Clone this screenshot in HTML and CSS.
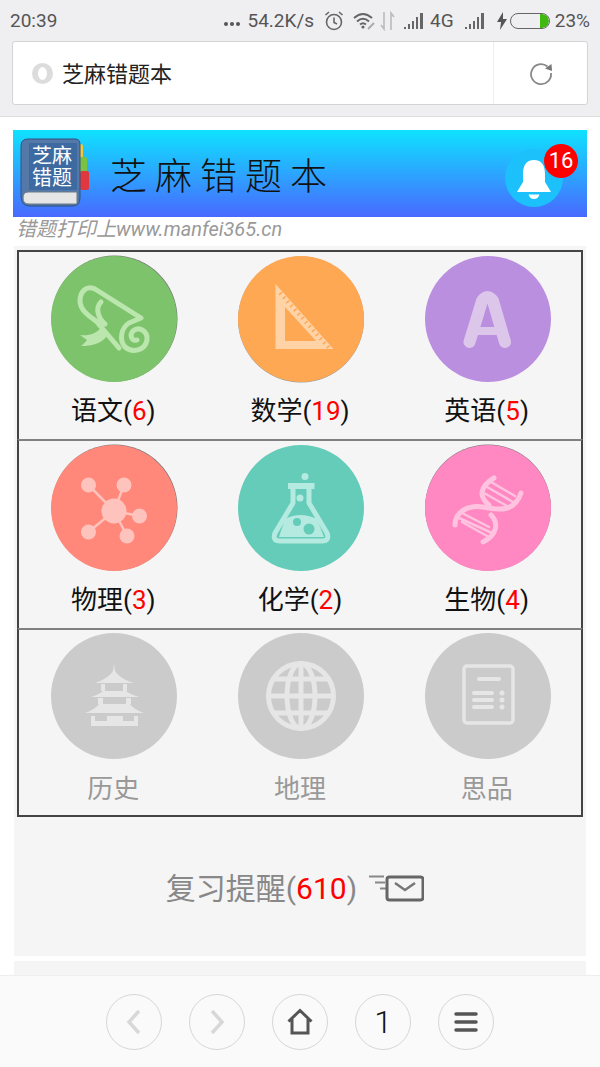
FILE: index.html
```html
<!DOCTYPE html>
<html lang="zh-CN">
  <head>
    <meta charset="UTF-8" />
    <meta name="viewport" content="width=device-width, initial-scale=1.0" />
    <title>芝麻错题本</title>
    <link rel="stylesheet" href="styles.css">
  </head>
  <body>
    <div class="status-bar">
      <span class="clock">20:39</span>
      <div class="status-right">
        <span class="dots"><i></i><i></i><i></i></span>
        <span class="speed">54.2K/s</span>
        <svg class="st-alarm" width="20" height="22" viewBox="0 0 20 22"><circle cx="10" cy="12" r="7.5"/><path d="M10 7.5V12.5L13 14M1.5 5L5 2M18.5 5L15 2"/></svg>
        <svg class="st-wifi" width="22" height="20" viewBox="0 0 22 20"><path d="M1 7Q10 -1 19 7M4 10.5Q10 5 16 10.5M7 13.5Q10 11 13 13.5"/><circle cx="10" cy="16" r="1.6" class="st-fill"/><path class="st-pen" d="M15 18L21 12"/></svg>
        <svg class="st-arrows" width="15" height="20" viewBox="0 0 15 20"><path d="M4 1V18L1 14M11 19V2L14 6"/></svg>
        <svg class="st-signal" width="20" height="16" viewBox="0 0 20 16"><path d="M0 14h2v2H0zM4 11h2v5H4zM8 8h2v8H8zM12 4h2v12h-2zM16 0h3v16h-3z"/></svg>
        <span class="net">4G</span>
        <svg class="st-signal second" width="20" height="16" viewBox="0 0 20 16"><path d="M0 14h2v2H0zM4 11h2v5H4zM8 8h2v8H8zM12 4h2v12h-2zM16 0h3v16h-3z"/></svg>
        <svg class="st-bolt" width="10" height="18" viewBox="0 0 10 18"><path d="M6 0L0 10H4L3 18L10 7H6Z"/></svg>
        <span class="battery"><span class="battery-level"></span></span>
        <span class="percent">23%</span>
      </div>
    </div>

    <div class="browser-bar">
      <div class="address">
        <div class="address-title">
          <span class="favicon"></span>
          <span class="site-name">芝麻错题本</span>
        </div>
        <div class="reload">
          <svg width="26" height="26" viewBox="0 0 26 26"><path d="M19.5 6.5A10 10 0 1 0 23 13"/><path class="reload-head" d="M17 8.5L23.5 4L24 11Z"/></svg>
        </div>
      </div>
    </div>

    <main class="page">
      <header class="banner">
        <svg class="book" width="72" height="72" viewBox="0 0 72 72">
          <rect x="56" y="6" width="7" height="20" rx="2" fill="#f1c93a"/>
          <rect x="58" y="19" width="9" height="18" rx="2" fill="#7cc242"/>
          <rect x="60" y="33" width="9" height="19" rx="2" fill="#e0383e"/>
          <path d="M8 1H55Q60 1 60 6V60Q60 68 52 68H10Q1 68 1 58V8Q1 1 8 1Z" fill="#5478a8" stroke="#33527f" stroke-width="1"/>
          <rect x="9" y="5" width="48" height="47" fill="#3e6aa2"/>
          <path d="M8 54H57V66H9Q3 66 3 60T8 54Z" fill="#e6e6e6" stroke="#6b7a8a"/>
          <text x="32" y="25" class="book-text">芝麻</text>
          <text x="32" y="47" class="book-text">错题</text>
        </svg>
        <h1 class="banner-title">芝麻错题本</h1>
        <div class="bell">
          <svg width="58" height="58" viewBox="0 0 58 58"><path d="M29 11C21 11 18 17 18 25V33L12 43H46L40 33V25C40 17 37 11 29 11Z"/><path d="M23.5 45.500H34.500Q33 50 29 50T23.500 45.500Z"/></svg>
          <span class="badge">16</span>
        </div>
      </header>
      <p class="tagline">错题打印上www.manfei365.cn</p>

      <section class="panel">
        <div class="subjects">
          <a class="subject">
            <span class="disc green">
              <svg class="stroke-icon" viewBox="0 0 126 126"><path d="M44 33C36 29 29 35 29 45C29 54 38 60 45 65L68 92M44 33L90 62L78 67C70 72 68 84 74 91C81 97 94 95 96 84C97 75 88 70 82 75C78 79 81 86 86 84M50 46C44 52 47 62 54 68"/><path class="solid" d="M29 79C38 80 44 78 50 72L56 80C50 88 40 90 30 90C34 87 36 84 36 84Z"/></svg>
            </span>
            <span class="name">语文(<em>6</em>)</span>
          </a>
          <a class="subject">
            <span class="disc orange">
              <svg viewBox="0 0 126 126"><path class="solid" fill-rule="evenodd" d="M37.500 28L95.500 93H37.500ZM47 51V85H78Z"/><path class="ticks" d="M42 37L91 92"/></svg>
            </span>
            <span class="name">数学(<em>19</em>)</span>
          </a>
          <a class="subject">
            <span class="disc purple">
              <svg class="stroke-icon" viewBox="0 0 126 126"><path class="letter" d="M44.500 86L57 45Q62.500 37 68 45L80 86"/><path class="bar" d="M50 75H75"/></svg>
            </span>
            <span class="name">英语(<em>5</em>)</span>
          </a>
        </div>
        <div class="subjects">
          <a class="subject">
            <span class="disc red">
              <svg viewBox="0 0 126 126"><path class="thin" d="M63 66L37.500 40M63 66L73 40M63 66L88.500 71M63 66L76 91M63 66L37.500 87"/><circle class="solid" cx="63" cy="66" r="12.500"/><circle class="solid" cx="37.500" cy="40" r="7.500"/><circle class="solid" cx="73" cy="40" r="7.500"/><circle class="solid" cx="88.500" cy="71" r="7.500"/><circle class="solid" cx="76" cy="91" r="7.500"/><circle class="solid" cx="37.500" cy="87" r="7.500"/></svg>
            </span>
            <span class="name">物理(<em>3</em>)</span>
          </a>
          <a class="subject">
            <span class="disc teal">
              <svg class="stroke-icon" viewBox="0 0 126 126"><circle class="solid" cx="67" cy="31.500" r="3.500"/><rect class="solid" x="50" y="38" width="26.500" height="6"/><path class="flask" d="M55 44V58L37 88Q34 96 42 96H84Q92 96 89 88L71 58V44"/><circle class="solid" cx="62" cy="53" r="3.500"/><path class="solid" fill-rule="evenodd" d="M47 74Q62 66 79 74L86 92H41ZM59 73A4 4 0 1 0 59 81A4 4 0 1 0 59 73ZM71 78.500A5.500 5.500 0 1 0 71 89.500A5.500 5.500 0 1 0 71 78.500Z"/></svg>
            </span>
            <span class="name">化学(<em>2</em>)</span>
          </a>
          <a class="subject">
            <span class="disc pink">
              <svg class="stroke-icon" viewBox="0 0 126 126"><path class="helix" d="M30 80C30 66 44 60 58 62C76 66 90 66 96 48M69 33C54 42 54 52 64 60M58 97C72 90 74 78 66 70"/><path class="thin" d="M66 37L90 51M62 42L88 57M59 48L82 61M37 68L64 82M34 73L67 88M37 77L62 91"/></svg>
            </span>
            <span class="name">生物(<em>4</em>)</span>
          </a>
        </div>
        <div class="subjects locked">
          <a class="subject">
            <span class="disc gray">
              <svg viewBox="0 0 126 126"><path class="solid" d="M63 31L64 38C68 44 76 48 83 50H44C50 48 58 44 62 38ZM50 51H54V58H50ZM72 51H76V58H72ZM40 64C46 62 50 60 52 58H75C77 60 82 62 88 64ZM47 65H52V71H47ZM75 65H80V71H75ZM34 80C40 78 46 74 48 71H79C81 74 87 78 93 80ZM40 83H44V88H56V83H72V88H83V83H87V93H40Z"/></svg>
            </span>
            <span class="name">历史</span>
          </a>
          <a class="subject">
            <span class="disc gray">
              <svg class="stroke-icon" viewBox="0 0 126 126"><g class="globe"><circle cx="63" cy="63" r="32.500"/><ellipse cx="63" cy="63" rx="14" ry="32.500"/><path d="M63 30V96M31 63H95M36 46H90M36 80H90"/></g></svg>
            </span>
            <span class="name">地理</span>
          </a>
          <a class="subject">
            <span class="disc gray">
              <svg class="stroke-icon" viewBox="0 0 126 126"><rect class="doc" x="39" y="33" width="49" height="57" rx="3"/><path class="doc-line" d="M54 46H74M49 60H67M49 67H67M49 74H67"/><circle class="solid" cx="77" cy="60" r="2.500"/><circle class="solid" cx="77" cy="67" r="2.500"/><circle class="solid" cx="77" cy="74" r="2.500"/></svg>
            </span>
            <span class="name">思品</span>
          </a>
        </div>
      </section>

      <section class="review">
        <span class="review-text">复习提醒(<em>610</em>)</span>
        <svg class="mail" width="56" height="28" viewBox="0 0 56 28"><path class="mail-speed" d="M1 2.500H16M7 8.500H17M12 14.500H18"/><rect class="mail-box" x="19" y="3" width="36" height="23" rx="2.500"/><path class="mail-flap" d="M27 9L37 16L47 9"/></svg>
      </section>
      <div class="review-next"></div>
    </main>

    <nav class="bottom-bar">
      <span class="nav-btn off"><svg width="24" height="28" viewBox="0 0 24 28"><path d="M17 3L7 14L17 25"/></svg></span>
      <span class="nav-btn off"><svg width="24" height="28" viewBox="0 0 24 28"><path d="M7 3L17 14L7 25"/></svg></span>
      <span class="nav-btn"><svg width="28" height="28" viewBox="0 0 28 28"><path d="M2.500 13.500L14 2.500L25.500 13.500M6 11V25H22V11"/></svg></span>
      <span class="nav-btn page-count">1</span>
      <span class="nav-btn"><svg width="26" height="24" viewBox="0 0 26 24"><path class="menu" d="M3 4H23M3 12H23M3 20H23"/></svg></span>
    </nav>
  </body>
</html>
```

FILE: styles.css
```css
:root {
  --chrome: #efeff2;
  --panel: #f5f5f5;
  --red: #f00;
}
* {
  box-sizing: border-box;
}
html,
body {
  height: 100%;
}
body {
  margin: 0;
  height: 1067px;
  overflow: hidden;
  display: flex;
  flex-direction: column;
  background: #fff;
  font-family: Roboto, "Noto Sans CJK SC", sans-serif;
}
em {
  font-style: normal;
  color: var(--red);
}

/* status bar */
.status-bar {
  height: 41px;
  flex: none;
  display: flex;
  align-items: center;
  justify-content: space-between;
  padding: 0 10px 0 10px;
  background: var(--chrome);
  color: #555;
  font-size: 19px;
}
.status-right {
  display: flex;
  align-items: center;
}
.dots {
  display: flex;
  gap: 2px;
  margin-top: 6px;
  margin-right: 7px;
}
.dots i {
  width: 4px;
  height: 4px;
  border-radius: 50%;
  background: #555;
}
.st-alarm,
.st-wifi,
.st-arrows {
  fill: none;
  stroke: #666;
  stroke-width: 1.6;
}
.st-alarm {
  margin-left: 10px;
}
.st-wifi {
  margin-left: 9px;
  stroke-width: 2;
}
.st-wifi .st-fill {
  fill: #666;
  stroke: none;
}
.st-wifi .st-pen {
  stroke: #aaa;
}
.st-arrows {
  margin-left: 5px;
  stroke: #bbb;
}
.st-signal {
  margin-left: 9px;
  fill: #666;
}
.st-signal.second {
  margin-left: 11px;
}
.net {
  margin-left: 6px;
}
.st-bolt {
  margin-left: 12px;
  fill: #555;
}
.battery {
  margin-left: 3px;
  width: 40px;
  height: 16px;
  border: 1px solid #666;
  border-radius: 8px;
  display: flex;
  justify-content: flex-end;
  overflow: hidden;
}
.battery-level {
  width: 9px;
  background: #3fb80f;
  border-radius: 0 7px 7px 0;
}
.percent {
  margin-left: 5px;
}

/* browser address bar */
.browser-bar {
  height: 76px;
  flex: none;
  padding: 0 12px;
  background: var(--chrome);
  border-bottom: 1px solid #ddd;
}
.address {
  height: 64px;
  display: flex;
  background: #fff;
  border: 1px solid #d4d4d4;
  border-radius: 3px;
}
.address-title {
  flex: 1;
  display: flex;
  align-items: center;
  padding-left: 19px;
}
.favicon {
  width: 21px;
  height: 21px;
  border-radius: 50%;
  background: #fff;
  border: 4px solid #dcdcdc;
  border-left-width: 6px;
  border-right-width: 6px;
}
.site-name {
  margin-left: 9px;
  margin-bottom: 3px;
  font-size: 22px;
  color: #222;
}
.reload {
  width: 94px;
  display: flex;
  align-items: center;
  justify-content: center;
  border-left: 1px solid #eee;
}
.reload svg {
  fill: none;
  stroke: #888;
  stroke-width: 1.8;
}
.reload .reload-head {
  fill: #777;
  stroke: none;
}

/* page */
.page {
  flex: 1;
  min-height: 0;
  padding: 13px 13px 0;
  overflow: hidden;
}
.banner {
  position: relative;
  height: 87px;
  display: flex;
  align-items: center;
  padding-left: 7px;
  background: linear-gradient(#0fe2ff, #4869ff);
}
.book {
  flex: none;
}
.book-text {
  font-size: 20px;
  fill: #fff;
  text-anchor: middle;
}
.banner-title {
  margin: 0 0 0 18px;
  font-size: 37px;
  font-weight: 300;
  letter-spacing: 8px;
  color: #111;
  white-space: nowrap;
}
.bell {
  position: absolute;
  left: 492px;
  top: 19px;
  width: 58px;
  height: 58px;
  border-radius: 50%;
  background: #1cc1fb;
}
.bell svg {
  display: block;
  fill: #fff;
}
.badge {
  position: absolute;
  left: 39px;
  top: -5px;
  width: 34px;
  height: 34px;
  border-radius: 50%;
  background: var(--red);
  color: #fff;
  font-size: 22px;
  line-height: 34px;
  text-align: center;
}
.tagline {
  margin: 0;
  height: 29px;
  padding-left: 3px;
  font-size: 20px;
  line-height: 25px;
  font-style: italic;
  color: #999;
  white-space: nowrap;
}
.panel {
  margin: 0 1px;
  padding: 4px 3px 2px;
  background: var(--panel);
}
.subjects {
  height: 189px;
  padding-left: 2px;
  display: grid;
  grid-template-columns: repeat(3, 1fr);
  background: var(--panel);
  border: 2px solid #444;
  border-bottom: 0;
  border-top-color: #808080;
}
.subjects:first-child {
  border-top-color: #444;
}
.subjects:last-child {
  border-bottom: 2px solid #444;
}
.subject {
  display: flex;
  flex-direction: column;
  align-items: center;
  padding-top: 4px;
}
.locked .subject {
  padding-top: 3px;
}
.disc {
  width: 126px;
  height: 126px;
  flex: none;
  border-radius: 50%;
}
.disc svg {
  display: block;
  width: 126px;
  height: 126px;
}
.green { background: #7dc36b; --tint: #bbe6ae; box-shadow: 0.5px -0.5px 0 #777; }
.orange { background: #ffa854; --tint: #ffd3a6; box-shadow: 0 0.5px 0 #999; }
.purple { background: #bb8fe0; --tint: #dcc7ea; }
.red { background: #ff887b; --tint: #ffc3bd; box-shadow: 0.5px -0.5px 0 #777; }
.teal { background: #64ccb9; --tint: #b5eae0; }
.pink { background: #ff88c2; --tint: #ffc3e0; box-shadow: 0 -0.5px 0 #777; }
.gray { background: #cbcbcb; --tint: #e6e6e6; }
.solid {
  fill: var(--tint);
  stroke: none;
}
.stroke-icon {
  fill: none;
  stroke: var(--tint);
  stroke-width: 5;
  stroke-linecap: round;
  stroke-linejoin: round;
}
.ticks {
  fill: none;
  stroke: #ffa854;
  stroke-width: 4;
  stroke-dasharray: 1.500 4;
}
.letter {
  stroke-width: 12;
}
.bar {
  stroke-width: 8;
  stroke-linecap: butt;
}
.thin {
  fill: none;
  stroke: var(--tint);
  stroke-width: 2.500;
}
.globe {
  stroke-width: 5;
  stroke-linecap: butt;
}
.doc {
  stroke-width: 3.500;
}
.doc-line {
  stroke-width: 4;
}
.name {
  margin-top: 11px;
  font-size: 26px;
  line-height: 36px;
  color: #111;
  transform: translateX(-1px);
}
.locked .name {
  margin-top: 12px;
  color: #999;
}

/* review reminder */
.review {
  margin: 0 1px;
  height: 137px;
  padding: 0 10px 3px 0;
  display: flex;
  align-items: center;
  justify-content: center;
  gap: 11px;
  background: var(--panel);
}
.review-text {
  font-size: 30px;
  color: #888;
}
.mail {
  margin-top: 4px;
  fill: none;
  stroke: #666;
  stroke-width: 2.500;
}
.mail-speed {
  stroke: #888;
  stroke-width: 1.800;
}
.mail-box {
  stroke-width: 3;
}
.mail-flap {
  stroke: #777;
}
.review-next {
  margin: 5px 1px 0;
  height: 30px;
  background: var(--panel);
}

/* bottom nav */
.bottom-bar {
  height: 92px;
  flex: none;
  display: flex;
  align-items: center;
  justify-content: center;
  gap: 27px;
  background: #fafafa;
  border-top: 1px solid #eee;
}
.nav-btn {
  width: 56px;
  height: 56px;
  display: flex;
  align-items: center;
  justify-content: center;
  border: 1.500px solid #d6d6d6;
  border-radius: 50%;
}
.nav-btn svg {
  fill: none;
  stroke: #555;
  stroke-width: 3;
}
.nav-btn.off svg {
  stroke: #d8d8d8;
  stroke-width: 3.500;
}
.nav-btn .menu {
  stroke-width: 3.500;
  stroke-linecap: round;
}
.page-count {
  font-size: 32px;
  font-weight: 300;
  color: #111;
}
```
